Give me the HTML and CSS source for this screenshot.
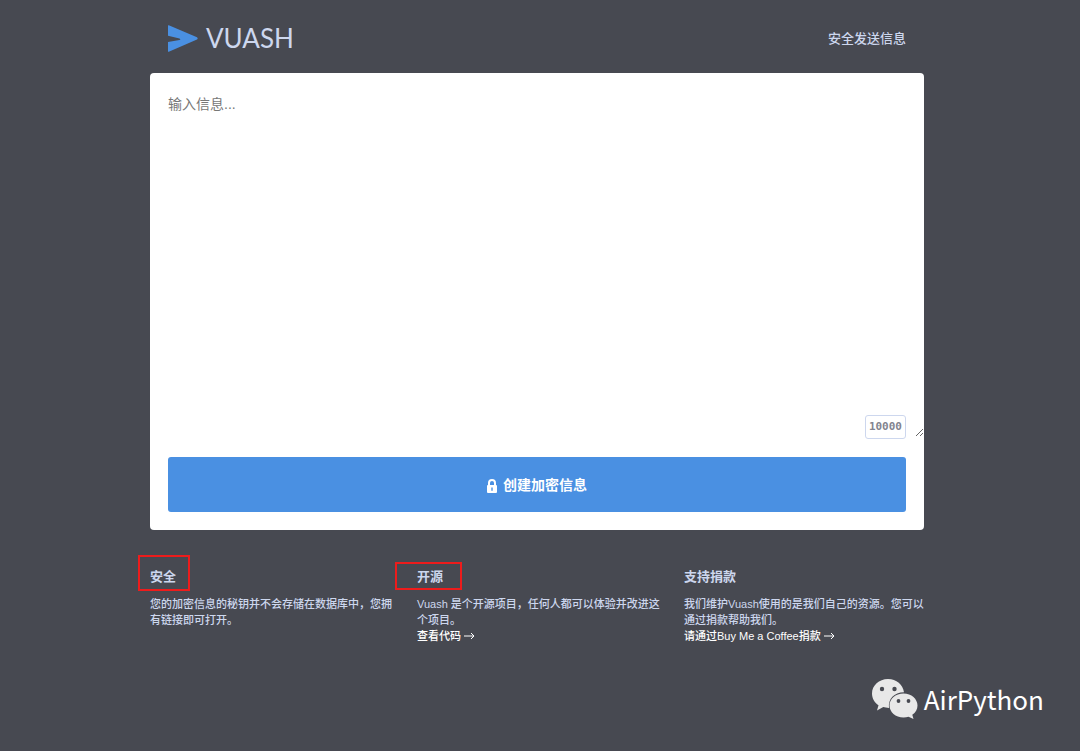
FILE: index.html
```html
<!DOCTYPE html>
<html lang="zh-CN">
<head>
<meta charset="utf-8">
<meta name="viewport" content="width=device-width, initial-scale=1">
<title>Vuash</title>
<link rel="stylesheet" href="styles.css">
</head>
<body>
<div class="container">
  <header class="header">
    <a class="logo" href="#">
      <svg class="logo-mark" viewBox="0 0 30 27" aria-hidden="true"><path d="M.8.3 29 12.2q1.4 1.3 0 2.4L.8 26.8Q0 27 0 26.2V17l11.500-1.900q1.600-.8 0-1.600L0 10.700V.8Q0 0 .8.3Z"/></svg>
      <span>VUASH</span>
    </a>
    <p class="tagline">安全发送信息</p>
  </header>
  <main>
    <form class="card">
      <div class="field">
        <textarea class="message" aria-label="输入信息" placeholder="输入信息..."></textarea>
        <output class="counter">10000</output>
      </div>
      <button class="submit" type="button">
        <svg class="lock" viewBox="0 0 10 14" aria-hidden="true"><path fill-rule="evenodd" d="M1 6V4a4 4 0 0 1 8 0v2q1 0 1 1v6q0 1-1 1H1q-1 0-1-1V7q0-1 1-1Zm2 0h4V4a2 2 0 0 0-4 0ZM4.300 8.500v3.200h1.400V8.500Z"/></svg>
        <span>创建加密信息</span>
      </button>
    </form>
  </main>
  <footer class="features">
    <section>
      <h2 class="title"><span class="marked marked-tall">安全</span></h2>
      <p class="text">您的加密信息的秘钥并不会存储在数据库中，您拥有链接即可打开。</p>
    </section>
    <section>
      <h2 class="title"><span class="marked marked-wide">开源</span></h2>
      <p class="text">Vuash 是个开源项目，任何人都可以体验并改进这个项目。</p>
      <a class="link" href="#">查看代码 <svg class="arrow" viewBox="0 0 11 8" aria-hidden="true"><path d="M0 4h10M7 1l3 3-3 3"/></svg></a>
    </section>
    <section>
      <h2 class="title">支持捐款</h2>
      <p class="text">我们维护Vuash使用的是我们自己的资源。您可以通过捐款帮助我们。</p>
      <a class="link" href="#">请通过Buy Me a Coffee捐款 <svg class="arrow" viewBox="0 0 11 8" aria-hidden="true"><path d="M0 4h10M7 1l3 3-3 3"/></svg></a>
    </section>
  </footer>
</div>
<div class="watermark">
  <svg class="wechat" viewBox="0 0 46 40" aria-hidden="true">
    <path class="bubble" d="M16 0C7 0 0 6.500 0 14.500c0 5 2.600 9 6.500 11.700L5 31.500l6.300-3.400c1.500.5 3.500.8 5.700.8C16 20 22 13.500 32 13.300 31 5.500 24.500 0 16 0Z"/>
    <path class="bubble" d="M31.500 14.500C23.500 14.500 17.500 20 17.500 26.500s6 12 14 12c1.800 0 3.500-.3 5-.8l5 2.300-1.200-4.200c3.300-2.200 5.200-5.500 5.200-9.300 0-6.500-6-12-14-12Z"/>
    <g class="eyes"><circle cx="10" cy="10" r="2.200"/><circle cx="22.500" cy="10" r="2.200"/><circle cx="26.500" cy="22" r="1.900"/><circle cx="36.500" cy="22" r="1.900"/></g>
  </svg>
  <span>AirPython</span>
</div>
</body>
</html>
```
FILE: styles.css
```css
* { box-sizing: border-box; }
body {
  margin: 0;
  padding: 0 6px 0 0;
  background: #474951;
  color: #cdd7ee;
  font-family: "Liberation Sans", "Noto Sans CJK SC", sans-serif;
}
h2, p { margin: 0; }
a { color: inherit; text-decoration: none; }
.container { max-width: 774px; margin: 0 auto; }
.header {
  display: flex;
  align-items: center;
  justify-content: space-between;
  padding: 20px 18px 17px;
}
.logo {
  display: flex;
  align-items: center;
  gap: 8px;
  font: 400 26px/36px Lato, sans-serif;
}
.logo-mark { width: 30px; height: 27px; fill: #4a90e2; }
.tagline { padding-top: 2px; font-size: 13px; line-height: 20px; font-weight: 500; }
.card {
  background: #fff;
  border-radius: 4px;
  padding-bottom: 18px;
}
.field { position: relative; margin-bottom: 20px; }
.message {
  display: block;
  width: 100%;
  height: 364px;
  padding: 21px 18px;
  border: 0;
  outline: 0;
  border-radius: 4px;
  background: transparent;
  resize: vertical;
  font: 14px/20px "Liberation Sans", "Noto Sans CJK SC", sans-serif;
}
.message::placeholder { color: #777; }
.counter {
  position: absolute;
  right: 18px;
  bottom: -2px;
  padding: 0 3px;
  border: 1px solid #cdd7ee;
  border-radius: 3px;
  background: #fff;
  color: #82848f;
  font: bold 11px/22px "DejaVu Sans Mono", monospace;
}
.submit {
  display: flex;
  align-items: center;
  justify-content: center;
  gap: 6px;
  width: calc(100% - 36px);
  margin: 0 18px;
  padding: 18px 17px 16px;
  border: 0;
  border-radius: 3px;
  background: #4a90e2;
  color: #fff;
  font: bold 14px/21px "Liberation Sans", "Noto Sans CJK SC", sans-serif;
}
.lock { width: 10px; height: 14px; fill: #fff; }
.features {
  display: grid;
  grid-template-columns: repeat(3, 1fr);
  gap: 27px;
  padding-top: 37px;
}
.title { margin-bottom: 9px; font-size: 13px; line-height: 20px; font-weight: bold; }
.text { margin-right: -4px; font-size: 11px; line-height: 16px; font-weight: 500; }
.link { display: block; color: #fff; font-size: 11px; line-height: 16px; font-weight: 500; }
.arrow { width: 11px; height: 8px; fill: none; stroke: #fff; }
.marked { position: relative; }
.marked::after { content: ""; position: absolute; border: 2px solid #ee1c1c; }
.marked-tall::after { inset: -14px -14px -7px -12px; }
.marked-wide::after { inset: -7px -19px -6px -22px; }
.watermark {
  position: absolute;
  right: 36px;
  bottom: 31px;
  display: flex;
  align-items: center;
  gap: 6px;
  color: #fff;
  font: 26px/42px "Noto Sans CJK SC", sans-serif;
}
.wechat { width: 46px; height: 40px; overflow: visible; }
.bubble { fill: #e8e8e8; }
.eyes { fill: #474951; }
```
